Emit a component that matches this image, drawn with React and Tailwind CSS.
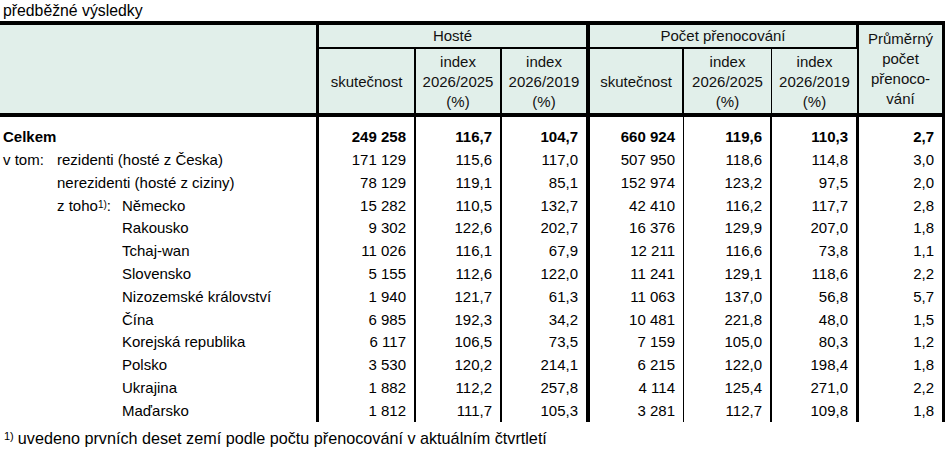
const cols = "grid grid-cols-[319px_97px_86px_88px_94px_88px_87px_86px]";

const rows = [
  { label: "Celkem", kind: "total", v: ["249 258", "116,7", "104,7", "660 924", "119,6", "110,3", "2,7"] },
  { label: "rezidenti (hosté z Česka)", kind: "vtom", v: ["171 129", "115,6", "117,0", "507 950", "118,6", "114,8", "3,0"] },
  { label: "nerezidenti (hosté z ciziny)", kind: "sub", v: ["78 129", "119,1", "85,1", "152 974", "123,2", "97,5", "2,0"] },
  { label: "Německo", kind: "ztoho", v: ["15 282", "110,5", "132,7", "42 410", "116,2", "117,7", "2,8"] },
  { label: "Rakousko", kind: "country", v: ["9 302", "122,6", "202,7", "16 376", "129,9", "207,0", "1,8"] },
  { label: "Tchaj-wan", kind: "country", v: ["11 026", "116,1", "67,9", "12 211", "116,6", "73,8", "1,1"] },
  { label: "Slovensko", kind: "country", v: ["5 155", "112,6", "122,0", "11 241", "129,1", "118,6", "2,2"] },
  { label: "Nizozemské království", kind: "country", v: ["1 940", "121,7", "61,3", "11 063", "137,0", "56,8", "5,7"] },
  { label: "Čína", kind: "country", v: ["6 985", "192,3", "34,2", "10 481", "221,8", "48,0", "1,5"] },
  { label: "Korejská republika", kind: "country", v: ["6 117", "106,5", "73,5", "7 159", "105,0", "80,3", "1,2"] },
  { label: "Polsko", kind: "country", v: ["3 530", "120,2", "214,1", "6 215", "122,0", "198,4", "1,8"] },
  { label: "Ukrajina", kind: "country", v: ["1 882", "112,2", "257,8", "4 114", "125,4", "271,0", "2,2"] },
  { label: "Maďarsko", kind: "country", v: ["1 812", "111,7", "105,3", "3 281", "112,7", "109,8", "1,8"] },
];

// right border for each value column
const valueBorders = [
  "border-r-2",
  "border-r-2",
  "border-r-4",
  "border-r",
  "border-r-2",
  "border-r-[3px]",
  "border-r-[3px]",
];

const Label = ({ row }) => {
  if (row.kind === "total") {
    return <span className="pl-[3px] font-bold">{row.label}</span>;
  }
  if (row.kind === "vtom") {
    return (
      <div className="flex pl-[3px]">
        <span className="w-[54px]">v tom:</span>
        <span>{row.label}</span>
      </div>
    );
  }
  if (row.kind === "sub") {
    return <span className="pl-[57px]">{row.label}</span>;
  }
  if (row.kind === "ztoho") {
    return (
      <div className="flex pl-[57px]">
        <span className="w-[65px]">
          z toho<sup className="text-[10px] relative -top-[3px]">1)</sup>:
        </span>
        <span>{row.label}</span>
      </div>
    );
  }
  return <span className="pl-[122px]">{row.label}</span>;
};

const Header = () => (
  <div className={`${cols} grid-rows-[28px_68px] bg-[#e1efea] text-[#111]`}>
    <div className="row-span-2 border-t-4 border-b-4 border-r-[3px] border-black" />

    <div className="col-span-3 flex items-center justify-center border-t-4 border-b-2 border-r-4 border-black">
      Hosté
    </div>

    <div className="col-span-3 flex items-center justify-center border-t-4 border-b-2 border-r-[3px] border-black">
      Počet přenocování
    </div>

    <div className="row-span-2 flex flex-col items-center justify-center border-t-4 border-b-4 border-r-[3px] border-black text-center leading-[20px]">
      <span>Průměrný</span>
      <span>počet</span>
      <span>přenoco-</span>
      <span>vání</span>
    </div>

    {[0, 1].map((g) => (
      <div key={g} className="contents">
        <div className="flex items-center justify-center border-b-4 border-r-2 border-black pt-[2px]">
          skutečnost
        </div>
        <div className={`flex flex-col items-center justify-center border-b-4 border-black text-center leading-[20px] pt-[2px] ${g === 0 ? "border-r-2" : "border-r"}`}>
          <span>index</span>
          <span>2026/2025</span>
          <span>(%)</span>
        </div>
        <div className={`flex flex-col items-center justify-center border-b-4 border-black text-center leading-[20px] pt-[2px] ${g === 0 ? "border-r-4" : "border-r-2"}`}>
          <span>index</span>
          <span>2026/2019</span>
          <span>(%)</span>
        </div>
      </div>
    ))}
  </div>
);

const App = () => {
  return (
    <div className="w-[945px] h-[455px] bg-white text-black text-[15px] font-['Liberation_Sans',Arial,sans-serif] overflow-hidden">

      {/* Title */}
      <div className="h-[21px] pl-[3px] pt-[1px] leading-[19px] text-[15.8px]">
        předběžné výsledky
      </div>

      <Header />

      {/* Body */}
      <div>
        {rows.map((row, i) => (
          <div
            key={row.label}
            className={`${cols} ${i === 0 ? "h-[31px] items-end" : "h-[22.8px] items-center"} leading-[23px]`}
          >
            <div className="flex h-full items-end border-r-[3px] border-black whitespace-nowrap">
              <div className={`flex w-full ${i === 0 ? "" : "h-full items-center"}`}>
                <Label row={row} />
              </div>
            </div>
            {row.v.map((val, j) => (
              <div
                key={j}
                className={`flex h-full justify-end pr-2 border-black ${valueBorders[j]} ${i === 0 ? "items-end font-bold" : "items-center"}`}
              >
                {val.replace(" ", "\u00a0")}
              </div>
            ))}
          </div>
        ))}
      </div>

      {/* Footnote */}
      <div className="mt-[7px] pl-[4px] leading-[19px] whitespace-nowrap text-[16.2px]">
        <sup className="text-[11px] relative -top-[4px]">1)</sup>
        <span className="pl-[4px]">uvedeno prvních deset zemí podle počtu přenocování v aktuálním čtvrtletí</span>
      </div>

    </div>
  );
};

export default App;
